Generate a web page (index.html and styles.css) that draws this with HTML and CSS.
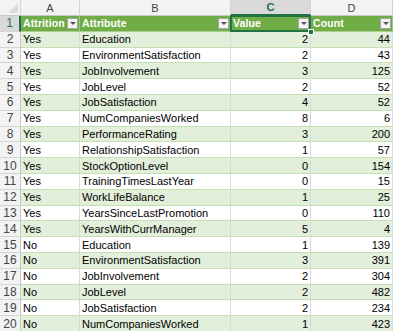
FILE: index.html
```html
<!DOCTYPE html>
<html lang="en">
	<head>
		<meta charset="UTF-8" />
		<title>Attrition sheet</title>
		<link rel="stylesheet" href="styles.css">
	</head>
	<body>
		<div class="sheet" id="sheet">
			<div class="corner"><span class="corner-tri"></span></div>
			<div class="col-head">A</div>
			<div class="col-head">B</div>
			<div class="col-head active">C</div>
			<div class="col-head">D</div>

			<div class="row-head active">1</div>
			<div class="th"><span>Attrition</span><span class="filter"></span></div>
			<div class="th"><span>Attribute</span><span class="filter"></span></div>
			<div class="th selected"><span>Value</span><span class="filter"></span><span class="handle"></span></div>
			<div class="th"><span>Count</span><span class="filter"></span></div>
		</div>

		<script>
			const rows = [
				['Yes', 'Education', 2, 44],
				['Yes', 'EnvironmentSatisfaction', 2, 43],
				['Yes', 'JobInvolvement', 3, 125],
				['Yes', 'JobLevel', 2, 52],
				['Yes', 'JobSatisfaction', 4, 52],
				['Yes', 'NumCompaniesWorked', 8, 6],
				['Yes', 'PerformanceRating', 3, 200],
				['Yes', 'RelationshipSatisfaction', 1, 57],
				['Yes', 'StockOptionLevel', 0, 154],
				['Yes', 'TrainingTimesLastYear', 0, 15],
				['Yes', 'WorkLifeBalance', 1, 25],
				['Yes', 'YearsSinceLastPromotion', 0, 110],
				['Yes', 'YearsWithCurrManager', 5, 4],
				['No', 'Education', 1, 139],
				['No', 'EnvironmentSatisfaction', 3, 391],
				['No', 'JobInvolvement', 2, 304],
				['No', 'JobLevel', 2, 482],
				['No', 'JobSatisfaction', 2, 234],
				['No', 'NumCompaniesWorked', 1, 423],
			]

			const sheet = document.getElementById('sheet')

			sheet.insertAdjacentHTML(
				'beforeend',
				rows
					.map((r, i) => {
						const band = i % 2 === 0 ? ' band' : ''
						return `
				<div class="row-head">${i + 2}</div>
				<div class="td${band}">${r[0]}</div>
				<div class="td${band}">${r[1]}</div>
				<div class="td num${band}">${r[2]}</div>
				<div class="td num${band}">${r[3]}</div>`
					})
					.join('')
			)
		</script>
	</body>
</html>
```

FILE: styles.css
```css
* {
	margin: 0;
	padding: 0;
	box-sizing: border-box;
}

body {
	font-family: 'Liberation Sans', Arial, sans-serif;
	font-size: 11px;
	background: #fff;
	color: #000;
	overflow: hidden;
}

.sheet {
	display: grid;
	grid-template-columns: 21px 59px 151px 80px 82px;
	grid-template-rows: 16px repeat(20, 15.8px);
}

.corner {
	position: relative;
	background: #f3f3f3;
	border-right: 1px solid #d4d4d4;
	border-bottom: 1px solid #c6c6c6;
}

.corner-tri {
	position: absolute;
	right: 2px;
	bottom: 2px;
	width: 0;
	height: 0;
	border-left: 10px solid transparent;
	border-bottom: 10px solid #dcdcdc;
}

.col-head {
	display: flex;
	align-items: center;
	justify-content: center;
	background: #f3f3f3;
	color: #444;
	border-right: 1px solid #d4d4d4;
	border-bottom: 1px solid #c6c6c6;
	font-size: 11px;
}

.col-head.active {
	background: #d9d9d9;
	color: #217346;
	font-weight: 700;
	border-bottom: 2px solid #217346;
}

.row-head {
	display: flex;
	align-items: center;
	justify-content: center;
	background: #f3f3f3;
	color: #444;
	border-right: 1px solid #c6c6c6;
	border-bottom: 1px solid #d4d4d4;
	font-size: 12px;
}

.row-head.active {
	background: #d9d9d9;
	color: #217346;
	border-right: 2px solid #217346;
}

.th {
	position: relative;
	display: flex;
	align-items: center;
	justify-content: space-between;
	padding: 0 1px 0 2px;
	background: #70ad47;
	color: #fff;
	font-weight: 700;
	font-size: 10.5px;
	letter-spacing: 0.1px;
	border-right: 1px solid #9cc77f;
	border-bottom: 1px solid #a9d08e;
}

.filter {
	position: relative;
	width: 11px;
	height: 11px;
	background: #f4f4f4;
	border: 1px solid #a6a6a6;
}

.filter::after {
	content: '';
	position: absolute;
	left: 2px;
	top: 3px;
	border-left: 3px solid transparent;
	border-right: 3px solid transparent;
	border-top: 3px solid #555;
}

.th.selected::before {
	content: '';
	position: absolute;
	left: -1px;
	top: -1px;
	right: -1px;
	bottom: -1px;
	border: 2px solid #217346;
}

.handle {
	position: absolute;
	right: -4px;
	bottom: -4px;
	width: 6px;
	height: 6px;
	background: #217346;
	border: 1px solid #fff;
	z-index: 2;
}

.td {
	display: flex;
	align-items: center;
	padding: 0 2px;
	white-space: nowrap;
	overflow: hidden;
	background: #fff;
	border-right: 1px solid #d9d9d9;
	border-bottom: 1px solid #c6e0b4;
}

.td.band {
	background: #e2efda;
}

.td.num {
	justify-content: flex-end;
}
```
